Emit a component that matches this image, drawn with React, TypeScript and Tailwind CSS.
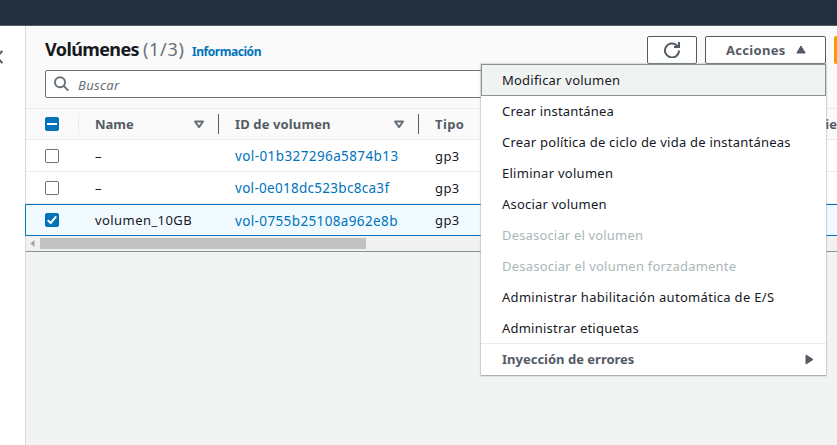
import React from "react";

const menuItems = [
  { label: "Modificar volumen", state: "active", tracking: "tracking-[0.22px]" },
  { label: "Crear instantánea", state: "normal", tracking: "tracking-[0.18px]" },
  { label: "Crear política de ciclo de vida de instantáneas", state: "normal", tracking: "tracking-[0.23px]" },
  { label: "Eliminar volumen", state: "normal", tracking: "tracking-[0.27px]" },
  { label: "Asociar volumen", state: "normal", tracking: "tracking-[0.22px]" },
  { label: "Desasociar el volumen", state: "disabled", tracking: "tracking-[0.17px]" },
  { label: "Desasociar el volumen forzadamente", state: "disabled", tracking: "tracking-[0.22px]" },
  { label: "Administrar habilitación automática de E/S", state: "normal", tracking: "tracking-[0.3px]" },
  { label: "Administrar etiquetas", state: "normal", tracking: "tracking-[0.22px]" },
];

const itemStyle: Record<string, string> = {
  active: "h-8 border border-[#879596] bg-[#f1f3f3] pt-px pl-5 text-[#16191f]",
  normal: "h-[31px] pl-[21px] text-[#16191f]",
  disabled: "h-[31px] pl-[21px] text-[#aab7b8]",
};

const volumes = [
  { name: "–", nameTracking: "", id: "vol-01b327296a5874b13", tracking: "tracking-[0.4px]", selected: false },
  { name: "–", nameTracking: "", id: "vol-0e018dc523bc8ca3f", tracking: "tracking-[0.29px]", selected: false },
  { name: "volumen_10GB", nameTracking: "tracking-[0.43px]", id: "vol-0755b25108a962e8b", tracking: "tracking-[0.37px]", selected: true },
];

function FilterIcon() {
  return (
    <svg className="mr-[13px] h-[9px] w-[12px]" viewBox="0 0 12 9" fill="none">
      <path d="M2 1.5h8L6 7.2z" stroke="#687078" strokeWidth="2" strokeLinejoin="round" />
    </svg>
  );
}

function Checkbox({ checked }: { checked: boolean }) {
  if (!checked) return <div className="h-[14px] w-[14px] rounded-[2px] border border-[#687078] bg-white" />;
  return (
    <div className="h-[14px] w-[14px] rounded-[2px] bg-[#0073bb]">
      <svg viewBox="0 0 14 14" className="h-[14px] w-[14px]" fill="none">
        <path d="M2.7 7.1L5.7 10L11.2 3.4" stroke="white" strokeWidth="2" />
      </svg>
    </div>
  );
}

function HeaderRow() {
  return (
    <div className="flex h-[31px] items-center border-b border-[#eaeded] bg-[#fafafa] font-bold text-[#545b64]">
      <div className="flex h-5 w-[53px] items-center border-r border-[#eaeded] pl-[19px]">
        <div className="flex h-[14px] w-[14px] items-center justify-center rounded-[2px] bg-[#0073bb]">
          <div className="h-[2px] w-[10px] bg-white" />
        </div>
      </div>
      <div className="flex h-5 w-[140px] items-center justify-between border-r border-[#545b64] pl-4">
        <span className="pt-0.5">Name</span>
        <FilterIcon />
      </div>
      <div className="flex h-5 w-[200px] items-center justify-between border-r border-[#545b64] pl-4">
        <span className="pt-0.5 tracking-[0.12px]">ID de volumen</span>
        <FilterIcon />
      </div>
      <div className="pt-0.5 pl-4 tracking-[0.4px]">Tipo</div>
      <div className="ml-auto flex w-[11px] justify-end overflow-hidden pt-0.5">ie</div>
    </div>
  );
}

function ActionsMenu() {
  return (
    <div className="absolute top-[28px] right-0 z-10 w-[345px] bg-white text-[13px] shadow-[0_1px_1px_0_#87959699,0_0_1px_1px_#aab7b866]">
      {menuItems.map((item) => (
        <div key={item.label} className={`flex items-center whitespace-nowrap ${itemStyle[item.state]} ${item.tracking}`}>
          {item.label}
        </div>
      ))}
      <div className="-mt-px flex h-8 items-center justify-between border-t border-[#eaeded] pr-3 pl-[21px] font-bold text-[#545b64]">
        <span>Inyección de errores</span>
        <svg className="h-[11px] w-[9px]" viewBox="0 0 9 11">
          <path d="M1 1l7 4.5L1 10z" fill="#545b64" stroke="#545b64" strokeLinejoin="round" />
        </svg>
      </div>
    </div>
  );
}

export default function App() {
  return (
    <div className="flex h-[445px] w-[837px] flex-col overflow-hidden bg-[#f2f3f3] text-[13px] text-[#16191f] [font-family:'Noto_Sans',sans-serif]">
      <header className="h-[26px] shrink-0 border-b border-[#545b64] bg-[#232f3e]" />
      <div className="flex min-h-0 flex-1">
        <aside className="w-[26px] shrink-0 border-r border-[#d5dbdb] bg-white pt-[24px]">
          <svg className="h-[14px] w-[4px]" viewBox="0 0 4 14" fill="none">
            <path d="M2.3 .8L-3.2 7l5.5 6.2" stroke="#545b64" strokeWidth="2" />
          </svg>
        </aside>
        <main className="min-w-0 flex-1">
          <section className="border-b border-[#879596] bg-[#fafafa]">
            <div className="flex h-[83px] flex-col border-b border-[#eaeded] pt-[10px] pl-[19px]">
              <div className="flex h-7 items-center">
                <h1 className="flex w-[139px] items-center pb-0.5 text-[18px] font-bold whitespace-nowrap">
                  <span className="w-[94px] tracking-[-0.6px]">Volúmenes</span>
                  <span className="ml-[4px] font-normal tracking-[0.7px] text-[#687078]">(1/3)</span>
                </h1>
                <a className="mt-1 ml-2 text-[12px] font-bold tracking-[-0.45px] text-[#0073bb]">Información</a>
                <div className="ml-auto flex">
                  <button className="mr-2 flex h-7 w-[50px] items-center justify-center rounded-[2px] border border-[#545b64] bg-white">
                    <svg className="h-4 w-4" viewBox="0 0 16 16" fill="none" stroke="#545b64" strokeWidth="2">
                      <path d="M15 8.5A7 7 0 1 1 12.6 3.2L14.5 5" />
                      <path d="M10 5h5V0" />
                    </svg>
                  </button>
                  <div className="relative mr-2">
                    <button className="flex h-7 w-[121px] items-center justify-between rounded-[2px] border border-[#545b64] bg-white pr-[19px] pl-5 font-bold text-[#545b64]">
                      <span className="pt-px tracking-[0.3px]">Acciones</span>
                      <svg className="mb-px h-[9px] w-[10px]" viewBox="0 0 10 9">
                        <path d="M5 1l4.2 7H.8z" fill="#545b64" stroke="#545b64" strokeLinejoin="round" />
                      </svg>
                    </button>
                    <ActionsMenu />
                  </div>
                  <div className="h-7 w-[3px] rounded-l-[2px] bg-[#ff9900]" />
                </div>
              </div>
              <div className="mt-[6px] flex h-7 w-[600px] items-center rounded-[2px] border border-[#687078] bg-white pl-2">
                <svg className="h-4 w-4" viewBox="0 0 16 16" fill="none" stroke="#687078" strokeWidth="2">
                  <circle cx="6" cy="6.3" r="5" />
                  <path d="M9.6 9.9l4.7 4.7" />
                </svg>
                <span className="ml-2 pt-[3px] tracking-[0.35px] text-[#687078] italic">Buscar</span>
              </div>
            </div>
            <HeaderRow />
            {volumes.map((v) => (
              <div
                key={v.id}
                className={
                  v.selected
                    ? "-ml-px flex h-8 items-center border border-r-0 border-[#0073bb] bg-[#f1faff]"
                    : "flex h-8 items-center border-b border-[#eaeded] bg-white"
                }
              >
                <div className="w-[69px] pl-[19px]">
                  <Checkbox checked={v.selected} />
                </div>
                <div className={`w-[140px] pt-0.5 ${v.nameTracking}`}>{v.name}</div>
                <div className={`w-[200px] pt-0.5 text-[13.5px] text-[#0073bb] ${v.tracking}`}>{v.id}</div>
                <div className="pt-0.5 tracking-[0.4px]">gp3</div>
              </div>
            ))}
            <div className="flex h-[15px] items-center bg-[#f1f1f1]">
              <svg className="ml-1 h-[7px] w-[5px]" viewBox="0 0 5 7">
                <path d="M4.5 0v7L.5 3.5z" fill="#a3a3a3" />
              </svg>
              <div className="ml-[5px] h-[11px] w-[326px] bg-[#c1c1c1]" />
            </div>
          </section>
        </main>
      </div>
    </div>
  );
}
